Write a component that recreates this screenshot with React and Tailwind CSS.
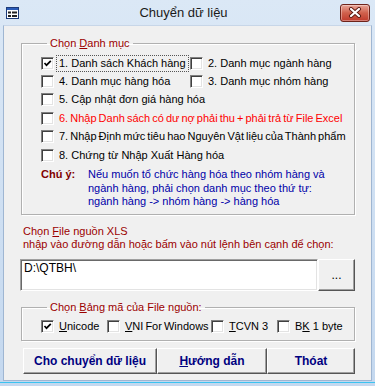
import React from 'react';

const FONT = { fontFamily: '"Liberation Sans", Arial, sans-serif' };

function Check({ checked }) {
  return (
    <span className="w-[13px] h-[13px] shrink-0 flex items-center justify-center bg-white border border-t-[#808080] border-l-[#808080] border-b-white border-r-white shadow-[inset_1px_1px_0_#404040,inset_-1px_-1px_0_#e3e3e3]">
      {checked && (
        <svg width="9" height="9" viewBox="0 0 9 9">
          <path d="M1.5 4 L3.5 6.2 L7.8 1.8" fill="none" stroke="#000" strokeWidth="1.7" />
        </svg>
      )}
    </span>
  );
}

function CheckRow({ checked, children, className = '', labelClass = '', focus }) {
  return (
    <div className={`flex items-center ${className}`}>
      <Check checked={checked} />
      <span
        className={`ml-[3px] px-[2px] leading-[15px] whitespace-nowrap ${
          focus ? 'outline outline-1 outline-dotted outline-[#555]' : ''
        } ${labelClass}`}
      >
        {children}
      </span>
    </div>
  );
}

function Btn3D({ children, className = '' }) {
  return (
    <button
      type="button"
      className={`flex items-center justify-center bg-[#f0f0f0] border border-t-white border-l-white border-r-[#555] border-b-[#555] shadow-[inset_-1px_-1px_0_#a0a0a0] ${className}`}
    >
      {children}
    </button>
  );
}

function TitleIcon() {
  return (
    <svg width="13" height="12" viewBox="0 0 13 12">
      <rect x="0.5" y="0.5" width="12" height="11" fill="#fff" stroke="#1c3a78" />
      <rect x="1" y="1" width="11" height="2" fill="#2a5bb8" />
      <rect x="2" y="4.5" width="3" height="2" fill="#222" />
      <rect x="6" y="4.5" width="5" height="2" fill="#222" />
      <rect x="2" y="8" width="3" height="2" fill="#222" />
      <rect x="6" y="8" width="5" height="2" fill="#222" />
    </svg>
  );
}

function CloseBox() {
  return (
    <div className="w-[30px] h-[18px] rounded-[3px] border border-[#6e231a] bg-gradient-to-b from-[#e8a598] via-[#d0604c] to-[#c0392b] flex items-center justify-center shadow-[inset_0_0_0_1px_rgba(255,255,255,0.35)]">
      <svg width="14" height="11" viewBox="0 0 14 11">
        <path d="M3 2 L11 9 M11 2 L3 9" stroke="#5a1810" strokeWidth="4" strokeLinecap="round" />
        <path d="M3 2 L11 9 M11 2 L3 9" stroke="#fff" strokeWidth="2.2" strokeLinecap="round" />
      </svg>
    </div>
  );
}

export default function App() {
  const red = 'text-[#9b0000]';
  return (
    <div
      className="w-[375px] h-[386px] flex flex-col bg-gradient-to-b from-[#dbe8f6] to-[#c4d8ef] text-[11px] text-black select-none"
      style={FONT}
    >
      {/* title bar */}
      <div className="h-[25px] flex items-center pl-[6px] pr-[5px] shrink-0">
        <TitleIcon />
        <div className="flex-1 text-center text-[13px] text-[#1a1a1a] pl-[8px]">Chuyển dữ liệu</div>
        <CloseBox />
      </div>

      {/* client */}
      <div className="mx-[3px] h-[356px] bg-[#f0f0f0] border border-[#9fb6d2] border-t-[#c7d6e8] flex flex-col shrink-0">
        <fieldset className="ml-[17px] w-[334px] mt-[11px] border border-[#b0b0b0] shadow-[inset_1px_1px_0_#fff,1px_1px_0_#fff] pl-[19px] pb-[5px]">
          <legend className={`ml-[6px] px-[3px] leading-[13px] ${red}`}>
            Chọn <span className="underline">D</span>anh mục
          </legend>
          <div className="pt-[4px] flex flex-col">
            <div className="flex h-[18.4px]">
              <CheckRow checked focus className="w-[149px]">1. Danh sách Khách hàng</CheckRow>
              <CheckRow>2. Danh mục ngành hàng</CheckRow>
            </div>
            <div className="flex h-[18.4px]">
              <CheckRow className="w-[149px]">4. Danh mục hàng hóa</CheckRow>
              <CheckRow>3. Danh mục nhóm hàng</CheckRow>
            </div>
            <CheckRow className="h-[18.4px]">5. Cập nhật đơn giá hàng hóa</CheckRow>
            <CheckRow className="h-[18.4px]" labelClass="text-[#ff0000] [word-spacing:-1px]">
              6. Nhập Danh sách có dư nợ phải thu + phải trả từ File Excel
            </CheckRow>
            <CheckRow className="h-[18.4px]" labelClass="[word-spacing:-1px]">
              7. Nhập Định mức tiêu hao Nguyên Vật liệu của Thành phẩm
            </CheckRow>
            <CheckRow className="h-[18.4px]">8. Chứng từ Nhập Xuất Hàng hóa</CheckRow>
            <div className="flex mt-[4px] leading-[13.5px]">
              <span className="w-[47px] shrink-0 font-bold text-[#800000]">Chú ý:</span>
              <span className="text-[#0000a8]">
                Nếu muốn tổ chức hàng hóa theo nhóm hàng và
                <br />
                ngành hàng, phải chọn danh mục theo thứ tự:
                <br />
                ngành hàng -&gt; nhóm hàng -&gt; hàng hóa
              </span>
            </div>
          </div>
        </fieldset>

        <div className={`ml-[19px] mt-[10px] leading-[13px] ${red}`}>
          <div>
            Chọn <span className="underline">F</span>ile nguồn XLS
          </div>
          <div>nhập vào đường dẫn hoặc bấm vào nút lệnh bên cạnh để chọn:</div>
        </div>

        <div className="flex ml-[16px] mt-[8px] h-[32px]">
          <div className="w-[298px] bg-white border border-t-[#a0a0a0] border-l-[#a0a0a0] border-b-white border-r-white shadow-[inset_1px_1px_0_#696969,inset_-1px_-1px_0_#e3e3e3] px-[3px] pt-[1px] text-[12px] leading-[15px]">
            D:\QTBH\
          </div>
          <Btn3D className="w-[37px] h-[32px] text-[12px] leading-none">...</Btn3D>
        </div>

        <fieldset className="ml-[17px] w-[334px] mt-[10px] border border-[#b0b0b0] shadow-[inset_1px_1px_0_#fff,1px_1px_0_#fff] pl-[19px] pt-[4px] pb-[4px]">
          <legend className={`ml-[6px] px-[3px] leading-[13px] ${red}`}>
            Chọn <span className="underline">B</span>ảng mã của File nguồn:
          </legend>
          <div className="flex h-[18px]">
            <CheckRow checked className="w-[66px]">
              <span className="underline">U</span>nicode
            </CheckRow>
            <CheckRow className="w-[104px]" labelClass="[word-spacing:-1px]">
              <span className="underline">V</span>NI For Windows
            </CheckRow>
            <CheckRow className="w-[66px]">
              <span className="underline">T</span>CVN 3
            </CheckRow>
            <CheckRow>
              B<span className="underline">K</span> 1 byte
            </CheckRow>
          </div>
        </fieldset>

        <div className="flex ml-[19px] mt-[7px] h-[26px] text-[12px] font-bold text-[#000080]">
          <Btn3D className="w-[134px] h-[26px]">Cho chuyển dữ liệu</Btn3D>
          <Btn3D className="w-[110px] h-[26px]">
            <span className="underline">H</span>ướng dẫn
          </Btn3D>
          <Btn3D className="w-[88px] h-[26px]">Thóat</Btn3D>
        </div>
      </div>

      <div className="mx-0 mt-[1px] h-[1px] bg-[#3cc3f0]" />
    </div>
  );
}
